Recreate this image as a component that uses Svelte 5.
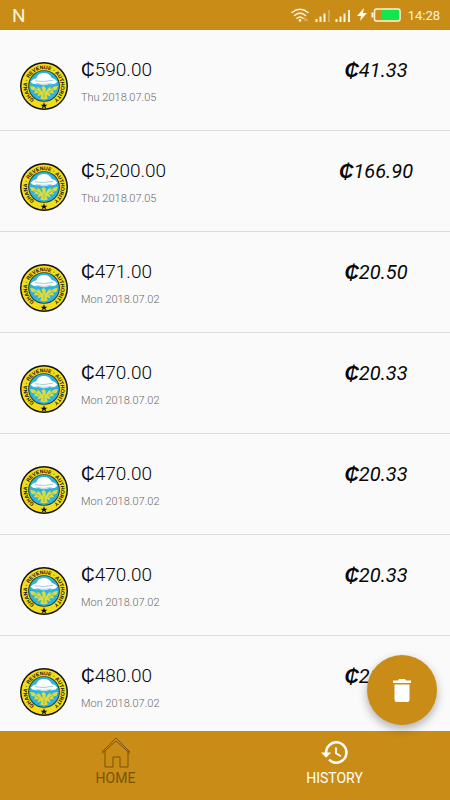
<script>
  const entries = [
    { total: '590.00', date: 'Thu 2018.07.05', tax: '41.33' },
    { total: '5,200.00', date: 'Thu 2018.07.05', tax: '166.90' },
    { total: '471.00', date: 'Mon 2018.07.02', tax: '20.50' },
    { total: '470.00', date: 'Mon 2018.07.02', tax: '20.33' },
    { total: '470.00', date: 'Mon 2018.07.02', tax: '20.33' },
    { total: '470.00', date: 'Mon 2018.07.02', tax: '20.33' },
    { total: '480.00', date: 'Mon 2018.07.02', tax: '21.03' }
  ];
</script>

{#snippet seal(id)}
  <svg class="seal" viewBox="0 0 100 100" aria-hidden="true">
    <defs>
      <path id={'ring' + id} d="M50 85A35 35 0 0 1 50 15A35 35 0 0 1 50 85" />
    </defs>
    <circle cx="50" cy="50" r="50" fill="#111" />
    <circle cx="50" cy="50" r="47" fill="#f3dc19" />
    <circle cx="50" cy="50" r="33" fill="#173b3b" />
    <circle cx="50" cy="50" r="31" fill="#2fb2dc" />
    <text class="ring"><textPath href={'#ring' + id} startOffset="50%" text-anchor="middle">GHANA · REVENUE · AUTHORITY</textPath></text>
    <path d="M50 78L42 76L45 69L36 72L39 65L29 65L32 60L24 58L21 50Q31 50 36 57L37 51Q43 55 46 63L47 57L44 54L49 50L54 54L53 63Q57 55 63 51L64 57Q69 50 79 50L76 58L68 60L71 65L61 65L64 72L55 69L58 76Z" fill="#dedb3c" />
    <path d="M30 56L42 64M70 56L58 64M50 63V75" stroke="#6fb66c" stroke-width="1.5" fill="none" />
    <path d="M22 41Q28 35 34 34Q37 24 48 23Q61 22 66 33Q74 35 78 41Q73 48 61 46Q50 51 39 46Q27 48 22 41Z" fill="#fff" />
    <path d="M31 39Q48 43 69 38M33 45Q49 48 66 45" stroke="#84b5c4" stroke-width="1.5" fill="none" />
    <path d="M50 84L52 89L57 89L53 92L55 97L50 94L45 97L47 92L43 89L48 89Z" fill="#111" />
  </svg>
{/snippet}

<div class="app">
  <header>
    <span class="network">N</span>
    <div class="status">
      <svg class="wifi" viewBox="0 0 18 14" width="18" height="14" aria-hidden="true">
        <g fill="none" stroke="#fff3df" stroke-width="1.5" stroke-linecap="round">
          <path d="M1 4.5Q9-2 17 4.5M3.5 7.5Q9 2.7 14.5 7.5M6 10.3Q9 7.6 12 10.3" />
        </g>
        <circle cx="9" cy="12.4" r="1.4" fill="#fff3df" />
        <path d="M14 9.500v3.500M16 11v2" stroke="#fff3df" opacity=".6" />
      </svg>
      <svg class="signal" viewBox="0 0 16 13" width="16" height="13" aria-hidden="true">
        <path d="M1.500 10v3M5.500 7.500V13M9.500 4.500V13" stroke="#fff3df" stroke-width="2" />
        <path d="M14 1v12" stroke="#fff3df" stroke-width="2" opacity=".3" />
      </svg>
      <svg class="signal second" viewBox="0 0 16 13" width="16" height="13" aria-hidden="true">
        <path d="M1.500 10v3M5.500 7.500V13M9.500 4.500V13M14 1v12" stroke="#fff3df" stroke-width="2" />
      </svg>
      <svg class="bolt" viewBox="0 0 10 14" width="10" height="14" aria-hidden="true">
        <path d="M7 0L0 8H4L3 13L10 5H6Z" fill="#fffaf0" />
      </svg>
      <svg class="battery" viewBox="0 0 30 14" width="30" height="14" aria-hidden="true">
        <path d="M1.500 4.500v5" stroke="#fff3df" stroke-width="2" />
        <rect x="3.500" y="1" width="25.500" height="12" rx="2" fill="#c88c17" stroke="#fff3df" stroke-width="1.500" />
        <rect x="10" y="2" width="18" height="10" fill="#12e64c" />
      </svg>
      <time>14:28</time>
    </div>
  </header>

  <main>
    <ul>
      {#each entries as entry, i}
        <li>
          {@render seal(i)}
          <div class="details">
            <span class="total"><span class="cedi">₵</span>{entry.total}</span>
            <span class="date">{entry.date}</span>
          </div>
          <span class="tax"><b>₵</b>{entry.tax}</span>
        </li>
      {/each}
    </ul>
    <button class="delete" aria-label="Delete history">
      <svg viewBox="0 0 18 23" width="18" height="23" aria-hidden="true">
        <path d="M0 1.500H5L6 0H12L13 1.500H18V4H0ZM1.500 5.500H16.500V20.500Q16.500 23 14 23H4Q1.500 23 1.500 20.500Z" fill="#fff" />
      </svg>
    </button>
  </main>

  <nav>
    <a class="home" href="#home">
      <svg viewBox="0 0 30 31" width="30" height="31" aria-hidden="true">
        <path d="M1 15L15 1L29 15M1 16.500L15 4L29 16.500M4 14V30H12V20H19V30H27V14" fill="none" stroke="#79530b" />
      </svg>
      <span>HOME</span>
    </a>
    <a class="history" href="#history" aria-current="page">
      <svg viewBox="1 2 22 20" width="28" height="31" aria-hidden="true">
        <path d="M13 3a9 9 0 0 0-9 9H1l3.890 3.890.070.140L9 12H6a7 7 0 1 1 2.060 4.940l-1.420 1.420A9 9 0 1 0 13 3zm-1 5v5l4.280 2.540.72-1.210-3.500-2.080V8H12z" fill="#fff" />
      </svg>
      <span>HISTORY</span>
    </a>
  </nav>
</div>

<style>
  :global(body) {
    margin: 0;
  }
  .app {
    display: flex;
    flex-direction: column;
    height: 100vh;
    background: #fafafa;
    color: #080808;
    font-family: Roboto, "Liberation Sans", sans-serif;
    font-weight: 300;
  }
  header {
    display: flex;
    flex: none;
    align-items: center;
    justify-content: space-between;
    box-sizing: border-box;
    height: 30px;
    padding: 0 10px 0 12px;
    background: #c88c17;
    color: #fff3df;
  }
  .network {
    font-size: 19px;
    font-weight: 400;
  }
  .status {
    display: flex;
    align-items: center;
  }
  .signal {
    margin-left: 6px;
  }
  .signal.second {
    margin-left: 4px;
  }
  .bolt {
    margin-left: 6px;
  }
  .battery {
    margin: 0 7px 0 4px;
  }
  time {
    font-size: 13px;
    font-weight: 400;
  }
  main {
    position: relative;
    flex: 1;
    min-height: 0;
  }
  ul {
    height: 100%;
    margin: 0;
    padding: 0;
    overflow: hidden;
    list-style: none;
  }
  li {
    display: flex;
    align-items: flex-start;
    box-sizing: border-box;
    height: 101px;
    padding-left: 20px;
    border-bottom: 1px solid #dcdcdc;
  }
  .seal {
    flex: none;
    width: 48px;
    height: 48px;
    margin-top: 32px;
  }
  .ring {
    font-family: "Liberation Sans", sans-serif;
    font-size: 11px;
    font-weight: 700;
    fill: #111;
  }
  .details {
    display: flex;
    flex: 1;
    flex-direction: column;
    gap: 6px;
    padding: 28px 0 0 13px;
  }
  .total {
    font-size: 19px;
    line-height: 24px;
  }
  .cedi {
    font-weight: 400;
  }
  .date {
    color: #6b6b6b;
    font-size: 11px;
    line-height: 20px;
  }
  .tax {
    width: 148px;
    padding-top: 28px;
    font-size: 20px;
    font-style: italic;
    font-weight: 400;
    line-height: 24px;
    text-align: center;
  }
  .tax b {
    font-weight: 900;
  }
  .delete {
    position: absolute;
    right: 13px;
    bottom: 6px;
    display: flex;
    align-items: center;
    justify-content: center;
    width: 70px;
    height: 70px;
    padding: 0;
    border: 0;
    border-radius: 50%;
    background: #c88c17;
    box-shadow: 0 4px 10px rgba(0, 0, 0, 0.3);
  }
  nav {
    display: flex;
    flex: none;
    box-sizing: border-box;
    height: 69px;
    padding: 6px 6px 0;
    background: #c88c17;
  }
  a {
    display: flex;
    flex: 1;
    flex-direction: column;
    align-items: center;
    font-size: 14px;
    font-weight: 400;
    line-height: 20px;
    text-decoration: none;
  }
  .home {
    color: #79530b;
  }
  .history {
    color: #fff;
  }
</style>
